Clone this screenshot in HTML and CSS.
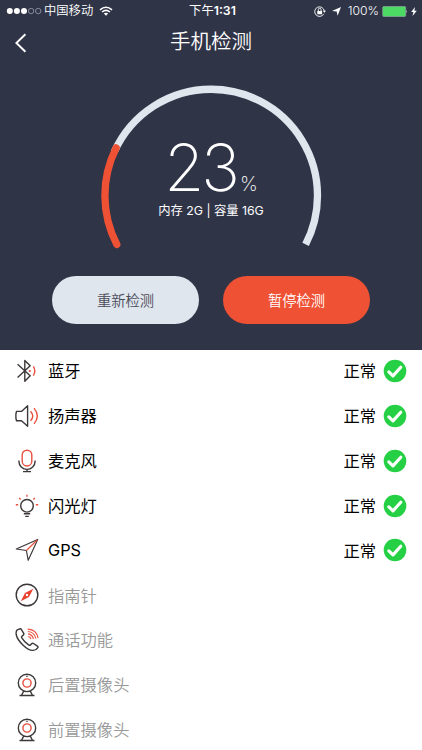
FILE: index.html
```html
<!DOCTYPE html>
<html lang="zh-CN">
<head>
    <meta charset="UTF-8">
    <meta name="viewport" content="width=device-width, initial-scale=1.0">
    <title>手机检测</title>
    <link rel="stylesheet" href="styles.css">
</head>
<body>
    <header class="top">
        <div class="status-bar">
            <div class="status-left">
                <svg class="signal" width="36" height="8" viewBox="0 0 36 8">
                    <g fill="#fff"><circle cx="3.8" cy="4" r="3"/><circle cx="10.9" cy="4" r="3"/><circle cx="18" cy="4" r="3"/></g>
                    <g fill="none" stroke="#a9acb8" stroke-width=".7"><circle cx="25.1" cy="4" r="2.7"/><circle cx="32.2" cy="4" r="2.7"/></g>
                </svg>
                <span class="carrier">中国移动</span>
                <svg width="14" height="10" viewBox="0 0 14 10">
                    <path d="M1 3.8Q7-1.3 13 3.8M3.1 6Q7 2.8 10.9 6" fill="none" stroke="#fff" stroke-width="1.6"/>
                    <path d="M4.8 7.5Q7 5.8 9.2 7.5L7 9.7z" fill="#fff"/>
                </svg>
            </div>
            <div class="status-time">下午<b>1:31</b></div>
            <div class="status-right">
                <svg width="12" height="11" viewBox="0 0 12 11">
                    <path d="M9.8 7.8A4.8 4.8 0 1 1 10.3 5.2" fill="none" stroke="#fff" stroke-width=".9"/>
                    <path d="M8.8 4.8h3.2l-1.6 2zM3.3 4.9h4.8v3.4H3.3z" fill="#fff"/>
                    <path d="M4.3 5V3.7a1.4 1.4 0 0 1 2.8 0V5" fill="none" stroke="#fff" stroke-width=".9"/>
                </svg>
                <svg class="location" width="9" height="9" viewBox="0 0 9 9"><path d="M9 0L5.6 8.8 4.7 4.4 0 3.9z" fill="#fff"/></svg>
                <span class="battery-text">100%</span>
                <svg class="battery" width="26" height="11" viewBox="0 0 26 11">
                    <rect x=".7" y=".5" width="23" height="10" rx="1" fill="#4cd964" stroke="#8aa79c" stroke-width=".7"/>
                    <path d="M24.3 3.7q1.5 1.6 0 3.5z" fill="#dce3e0"/>
                </svg>
                <svg width="6" height="9" viewBox="0 0 6 9"><path d="M4 0L.2 5h2.2L1.5 9 5.8 3.7H3.4z" fill="#fff"/></svg>
            </div>
        </div>

        <div class="nav-bar">
            <a href="#" class="back-btn" aria-label="返回">
                <svg width="12" height="20" viewBox="0 0 12 20"><path d="M10.4 1.3L1.4 10l9 8.7" fill="none" stroke="#fff" stroke-width="1.9"/></svg>
            </a>
            <h1 class="title">手机检测</h1>
        </div>

        <div class="gauge">
            <svg class="gauge-ring" width="222" height="166" viewBox="0 0 222 166">
                <path class="ring-track" pathLength="100" d="M16.8 160.4A106.3 106.3 0 1 1 205.6 160.4"/>
                <path class="ring-value" pathLength="100" d="M16.8 160.4A106.3 106.3 0 1 1 205.6 160.4"/>
            </svg>
            <div class="gauge-label">
                <div class="percent"><span class="number">23</span><span class="unit">%</span></div>
                <p class="memory">内存 2G | 容量 16G</p>
            </div>
        </div>

        <div class="actions">
            <button class="btn btn-retry">重新检测</button>
            <button class="btn btn-pause">暂停检测</button>
        </div>
    </header>

    <!-- shared check mark -->
    <svg class="defs" width="0" height="0">
        <symbol id="ok" viewBox="0 0 24 24">
            <circle cx="12" cy="12" r="11.3" fill="#25d044"/>
            <path d="M5.8 12.8l4.2 4.1 7.8-8.7" fill="none" stroke="#fff" stroke-width="3.1" stroke-linecap="round" stroke-linejoin="round"/>
        </symbol>
        <symbol id="camera" viewBox="0 0 24 24">
            <g class="dark">
                <circle cx="12" cy="9.9" r="8.7"/>
                <path d="M8.7 18.2l-2 3.8M15.3 18.2l2 3.8M4.5 22.5h15" />
                <path d="M11.3 3.4h1.4" />
            </g>
            <circle class="red" cx="12" cy="10" r="4.1"/>
        </symbol>
    </svg>

    <ul class="check-list">
        <li class="check-item">
            <svg class="icon" viewBox="0 0 24 24">
                <path class="dark" d="M2.6 5.2l12.6 11.5-5.4 5.6V1.5l5.4 5.3L2.6 18.5"/>
                <path class="red" d="M18.3 7.4q3.1 4.6 0 9.2"/>
                <circle cx="14.8" cy="12" r="1.1" fill="#e04f40"/>
            </svg>
            <span class="name">蓝牙</span>
            <span class="state">正常</span>
            <svg class="ok"><use href="#ok"/></svg>
        </li>
        <li class="check-item">
            <svg class="icon" viewBox="0 0 24 24">
                <path class="dark" d="M1.5 7.4h5L12.6 1.8v20.4L6.5 16.8h-5L.9 14V10z"/>
                <path class="red" d="M15.5 7.2q4.6 4.8 0 9.6M19 4.1q6.7 7.9 0 15.8"/>
            </svg>
            <span class="name">扬声器</span>
            <span class="state">正常</span>
            <svg class="ok"><use href="#ok"/></svg>
        </li>
        <li class="check-item">
            <svg class="icon" viewBox="0 0 24 24">
                <rect class="red" x="7.2" y="1.2" width="9.6" height="15.8" rx="4.8"/>
                <path class="dark" d="M3.9 11.5v.8a8.1 8.1 0 0 0 16.2 0v-.8M12 20.4v2.2M8 22.6h8"/>
            </svg>
            <span class="name">麦克风</span>
            <span class="state">正常</span>
            <svg class="ok"><use href="#ok"/></svg>
        </li>
        <li class="check-item">
            <svg class="icon" viewBox="0 0 24 24">
                <circle class="dark" cx="12" cy="11.8" r="6.3"/>
                <path class="dark" d="M8.8 19.7h6.4M10.2 22.4h3.6"/>
                <path class="red" d="M12 .7v2M4.2 4l1.5 1.5M19.8 4l-1.5 1.5M.8 10.8h2.4M20.8 10.8h2.4"/>
            </svg>
            <span class="name">闪光灯</span>
            <span class="state">正常</span>
            <svg class="ok"><use href="#ok"/></svg>
        </li>
        <li class="check-item">
            <svg class="icon" viewBox="0 0 24 24">
                <path class="dark thin" d="M22.7 1.4L1.3 11l10.1 1.5 1.8 9.8z"/>
                <path class="red thin" d="M22.2 2L11.4 12.5"/>
            </svg>
            <span class="name">GPS</span>
            <span class="state">正常</span>
            <svg class="ok"><use href="#ok"/></svg>
        </li>
        <li class="check-item pending">
            <svg class="icon" viewBox="0 0 24 24">
                <circle class="dark" cx="12" cy="12" r="10.8"/>
                <path d="M18.3 5.8L14 14 5.8 18.2 10 10z" fill="#e8402c"/>
                <circle cx="12" cy="12" r="1.2" fill="#fff"/>
            </svg>
            <span class="name">指南针</span>
        </li>
        <li class="check-item pending">
            <svg class="icon" viewBox="0 0 24 24">
                <path class="dark" d="M2.3 1.9L4.7.8q1-.4 1.6.6l2.4 4q.5 1-.4 1.7L6.9 8.2q-.7.7-.1 1.7 2.6 4.4 7.1 7.2.9.5 1.6-.2l1.3-1.3q.8-.7 1.7-.1l3.9 2.7q1 .7.3 1.7-1.9 2.7-5.1 2.5-4.3-.3-9.2-5Q2.2 11.8 1.2 6.5.7 3.3 2.3 1.9z"/>
                <path class="red thin" d="M13.3 8.4q2.2.6 2.7 2.8M13 5.9q4.4.6 5.4 5M12.8 3.5q6.7.5 8 7M12.6 1.1q9.3.5 10.4 9"/>
            </svg>
            <span class="name">通话功能</span>
        </li>
        <li class="check-item pending">
            <svg class="icon"><use href="#camera"/></svg>
            <span class="name">后置摄像头</span>
        </li>
        <li class="check-item pending">
            <svg class="icon"><use href="#camera"/></svg>
            <span class="name">前置摄像头</span>
        </li>
    </ul>
</body>
</html>
```
FILE: styles.css
```css
* {
    box-sizing: border-box;
}

body {
    margin: 0;
    height: 750px;
    overflow: hidden;
    font-family: Inter, "Noto Sans CJK SC", sans-serif;
    background-color: #fff;
    color: #000;
}

svg {
    display: block;
    flex-shrink: 0;
}

/* Dark top area */
.top {
    height: 350px;
    background-color: #303447;
    color: #fff;
}

.status-bar {
    height: 22px;
    padding: 0 5px 0 6px;
    display: grid;
    grid-template-columns: 1fr auto 1fr;
    align-items: center;
    font-size: 12px;
    line-height: 22px;
}

.status-left,
.status-right {
    display: flex;
    align-items: center;
}

.status-right {
    justify-content: flex-end;
}

.carrier {
    margin: 0 6px 0 2px;
    font-size: 12.3px;
    font-weight: 350;
}

.status-time {
    font-size: 12.3px;
    padding-left: 2px;
}

.status-time b {
    font-weight: 600;
}

.battery-text {
    font-size: 12.2px;
    font-weight: 350;
}

.location {
    margin: 0 7px 0 6px;
}

.battery {
    margin: 0 3px 0 3px;
}

.nav-bar {
    height: 42px;
    padding: 0 15px;
    display: grid;
    grid-template-columns: 40px 1fr 40px;
    align-items: center;
}

.title {
    margin: 0;
    font-size: 20.5px;
    font-weight: 350;
    line-height: 40px;
    padding-bottom: 2px;
    text-align: center;
}

/* Progress ring */
.gauge {
    width: 222px;
    height: 166px;
    margin: 20px auto 0;
    display: grid;
}

.gauge-ring,
.gauge-label {
    grid-area: 1 / 1;
}

.ring-track,
.ring-value {
    fill: none;
    stroke-width: 7.3;
}

.ring-track {
    stroke: #dfe6ee;
    stroke-dasharray: 0 22 78;
}

.ring-value {
    stroke: #ef5134;
    stroke-linecap: round;
    stroke-dasharray: 23 100;
}

.gauge-label {
    padding-top: 52px;
}

.percent {
    height: 65px;
    display: flex;
    justify-content: center;
    align-items: baseline;
    line-height: 64px;
}

.number {
    font-size: 65px;
    font-weight: 160;
    letter-spacing: -3px;
}

.unit {
    margin-left: 3px;
    font-size: 20px;
    font-weight: 200;
    line-height: 20px;
}

.memory {
    margin: 0;
    font-size: 12.3px;
    line-height: 20px;
    text-align: center;
}

.actions {
    padding: 26px 52px 0;
    display: flex;
    justify-content: space-between;
}

.btn {
    width: 147px;
    height: 48px;
    padding: 0 0 2px;
    border: none;
    border-radius: 24px;
    font-family: inherit;
    font-size: 14.3px;
    font-weight: 350;
}

.btn-retry {
    background-color: #dfe6ee;
    color: #4a4a58;
}

.btn-pause {
    background-color: #ef5134;
    color: #fff;
}

/* Check list */
.defs {
    position: absolute;
}

.check-list {
    margin: -1.4px 0 0;
    padding: 0;
    list-style: none;
}

.check-item {
    height: 44.87px;
    padding: 0 15px;
    display: flex;
    align-items: center;
    font-size: 16.3px;
}

.icon {
    width: 24px;
    height: 24px;
    margin-right: 9px;
}

.name {
    flex: 1;
}

.name,
.state {
    padding-bottom: 1.6px;
}

.ok {
    width: 24px;
    height: 24px;
    margin-left: 7px;
}

.pending .name {
    color: #999;
    font-weight: 350;
}

.dark,
.red {
    fill: none;
    stroke-width: 1.4;
    stroke-linejoin: round;
}

.dark {
    stroke: #3d3838;
}

.red {
    stroke: #e8503f;
}

.thin {
    stroke-width: 1.15;
}
```
